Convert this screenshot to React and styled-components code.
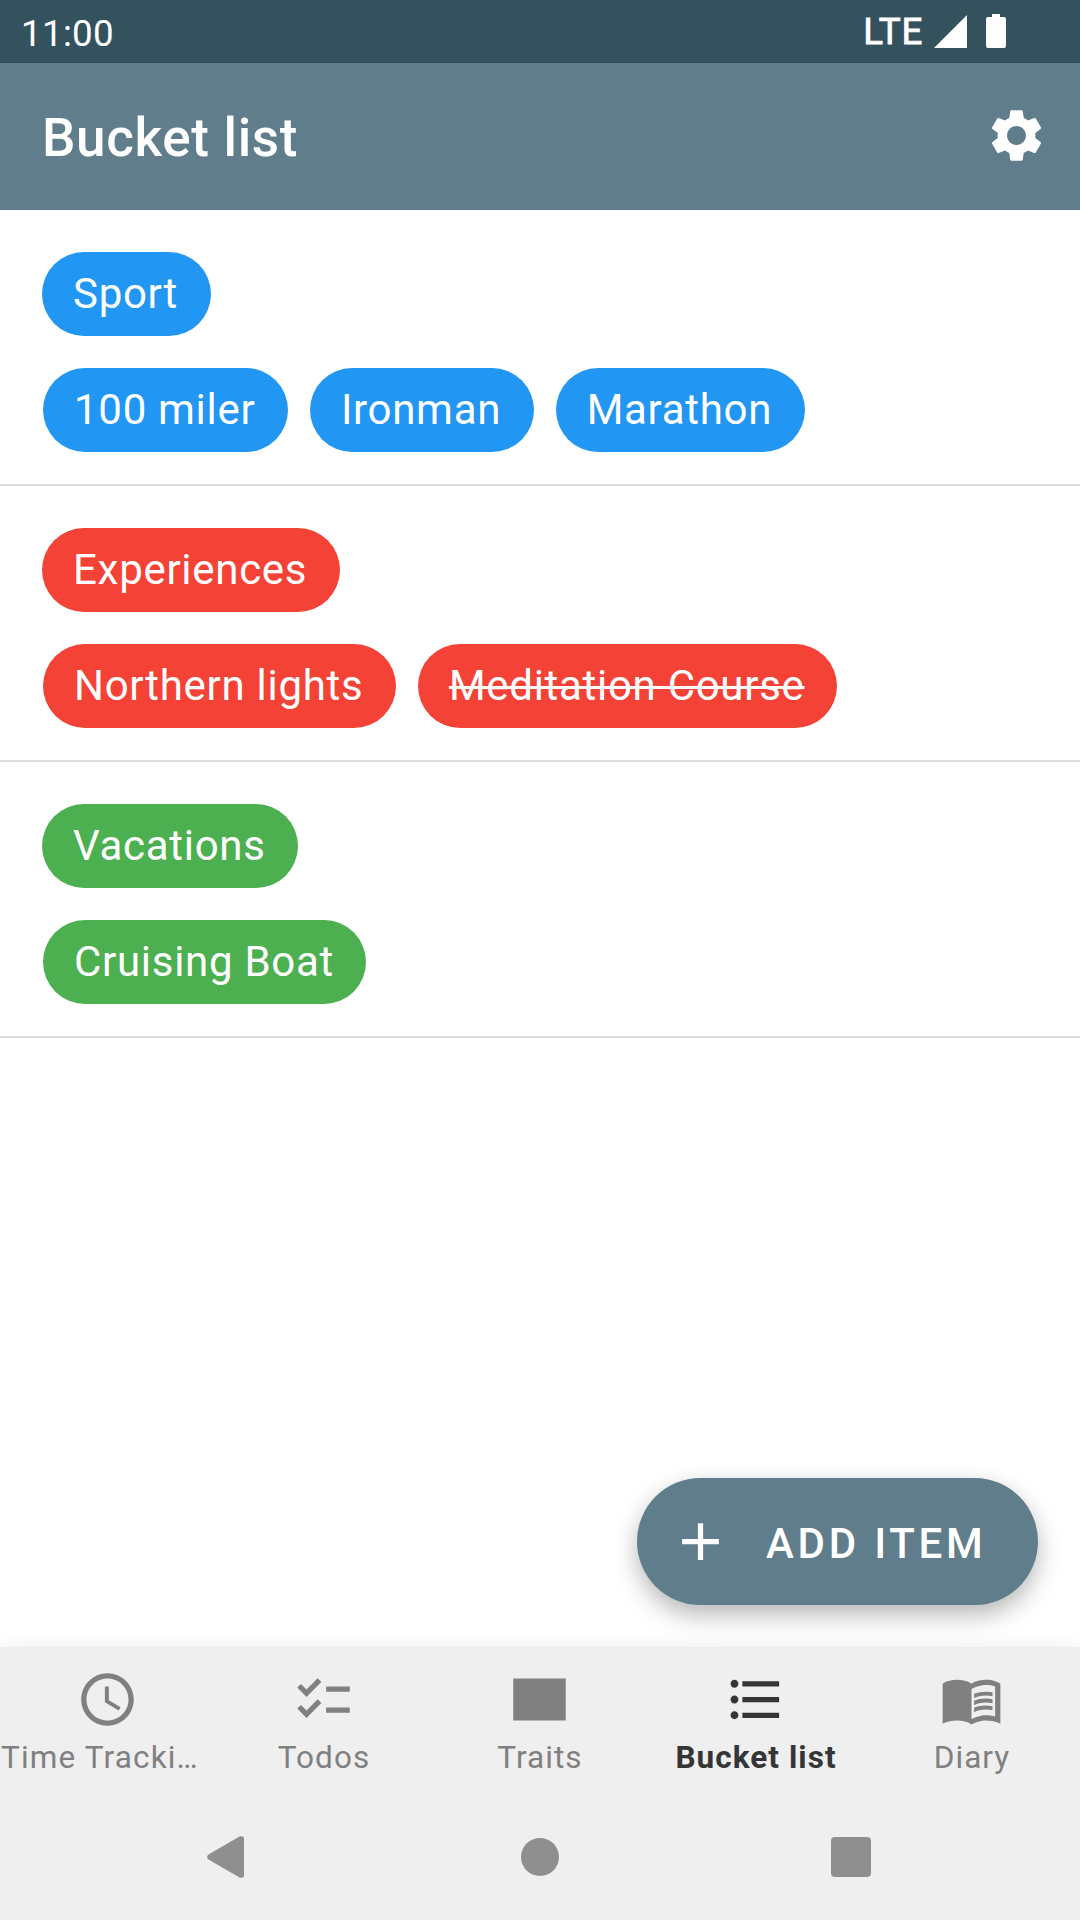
import styled, { createGlobalStyle, css } from "styled-components";
import {
  MdAdd,
  MdChecklist,
  MdFormatListBulleted,
  MdSchedule,
  MdSettings,
} from "react-icons/md";

const COLORS = {
  background: "#ffffff",
  primary: "#607d8b",
  primaryDark: "#34515e",
  blue: "#2196f3",
  red: "#f44336",
  green: "#4caf50",
  divider: "#dcdcdc",
  bar: "#efefef",
  inactive: "#808080",
  active: "#353535",
  systemButton: "#8f8f8f",
};

const groups = [
  {
    title: "Sport",
    color: COLORS.blue,
    items: [
      { label: "100 miler" },
      { label: "Ironman" },
      { label: "Marathon" },
    ],
  },
  {
    title: "Experiences",
    color: COLORS.red,
    items: [
      { label: "Northern lights" },
      { label: "Meditation Course", done: true },
    ],
  },
  {
    title: "Vacations",
    color: COLORS.green,
    items: [{ label: "Cruising Boat" }],
  },
];

const GlobalStyle = createGlobalStyle`
  *, *::before, *::after {
    box-sizing: border-box;
  }

  body {
    margin: 0;
    background-color: ${COLORS.background};
    font-family: Roboto, "Liberation Sans", sans-serif;
  }
`;

const Screen = styled.div`
  display: flex;
  flex-direction: column;
  width: 1080px;
  height: 1920px;
  overflow: hidden;
  background-color: ${COLORS.background};
`;

const StatusBar = styled.div`
  display: flex;
  align-items: center;
  justify-content: space-between;
  height: 63px;
  padding: 0 74px 0 21px;
  color: white;
  background-color: ${COLORS.primaryDark};
`;

const Clock = styled.span`
  padding-top: 3px;
  font-size: 36.75px;
  line-height: 43px;
  letter-spacing: 0.3px;
`;

const StatusIcons = styled.div`
  display: flex;
  align-items: center;
`;

const Network = styled.span`
  margin-right: 11px;
  font-size: 36.75px;
  line-height: 43px;
  letter-spacing: 0.7px;
  -webkit-text-stroke: 0.8px white;
`;

const SignalIcon = styled.svg`
  width: 33px;
  height: 33px;
  margin-right: 19px;
`;

const BatteryIcon = styled.svg`
  width: 20px;
  height: 34px;
  margin-bottom: 1px;
`;

const AppBar = styled.header`
  display: flex;
  align-items: center;
  justify-content: space-between;
  height: 147px;
  padding: 0 32px 0 42px;
  color: white;
  background-color: ${COLORS.primary};
`;

const Title = styled.h1`
  margin: 0;
  padding-top: 3px;
  font-size: 53px;
  font-weight: 500;
  line-height: 62px;
  letter-spacing: 0.65px;
`;

const SettingsIcon = styled(MdSettings)`
  width: 63px;
  height: 63px;
  margin-bottom: 3px;
`;

const Content = styled.main`
  flex: 1;
  display: flex;
  flex-direction: column;
`;

const Group = styled.section`
  display: flex;
  flex-direction: column;
  align-items: flex-start;
  gap: 32px;
  padding: 42px 42px 32px;
  border-bottom: 2px solid ${COLORS.divider};
`;

const ItemRow = styled.div`
  display: flex;
  gap: 22px;
  padding-left: 1px;
`;

const Chip = styled.div`
  height: 84px;
  padding: 0 32.5px 0 31px;
  border-radius: 42px;
  color: white;
  background-color: ${(p) => p.$color};
  font-size: 42px;
  line-height: 84px;
  letter-spacing: 0.71px;
  white-space: nowrap;
  text-decoration: ${(p) => (p.$done ? "line-through 2.5px" : "none")};
`;

const AddButton = styled.button`
  display: flex;
  align-items: center;
  align-self: flex-end;
  gap: 34px;
  width: 401px;
  height: 127px;
  margin: auto 42px 42px 0;
  padding: 0 0 0 32px;
  border: none;
  border-radius: 63.5px;
  color: white;
  background-color: ${COLORS.primary};
  box-shadow: 0 11px 24px rgba(0, 0, 0, 0.25), 0 2px 20px rgba(0, 0, 0, 0.04);
  font-family: inherit;
  font-size: 42px;
  font-weight: 500;
  line-height: 50px;
  letter-spacing: 3.75px;
  white-space: nowrap;
`;

const AddIcon = styled(MdAdd)`
  flex: none;
  width: 63px;
  height: 63px;
`;

const AddLabel = styled.span`
  padding-top: 5px;
`;

const BottomNav = styled.nav`
  display: grid;
  grid-template-columns: repeat(5, 1fr);
  height: 147px;
  background-color: ${COLORS.bar};
  box-shadow: 0 0 18px rgba(0, 0, 0, 0.08);
`;

const NavItem = styled.div`
  display: flex;
  flex-direction: column;
  align-items: center;
  min-width: 0;
  padding-top: 21px;
  color: ${(p) => (p.$active ? COLORS.active : COLORS.inactive)};

  svg {
    flex: none;
    width: 63px;
    height: 63px;
    margin-right: 1px;
  }
`;

const NavLabel = styled.span`
  width: 100%;
  margin-top: 8px;
  overflow: hidden;
  text-align: center;
  text-overflow: ellipsis;
  white-space: nowrap;
  font-size: 31.5px;
  font-weight: ${(p) => (p.$active ? 700 : 400)};
  line-height: 37px;
  letter-spacing: 1.05px;

  ${(p) =>
    p.$long &&
    css`
      padding: 0 8px 0 1px;
      text-align: left;
      letter-spacing: 1.15px;
    `}
`;

const SystemBar = styled.div`
  position: relative;
  display: flex;
  align-items: center;
  justify-content: space-between;
  height: 126px;
  padding: 0 209px 0 207px;
  background-color: ${COLORS.bar};
`;

const BackIcon = styled.svg`
  width: 37px;
  height: 42px;
`;

const HomeButton = styled.div`
  width: 38px;
  height: 38px;
  margin-left: 5px;
  border-radius: 50%;
  background-color: ${COLORS.systemButton};
`;

const RecentsButton = styled.div`
  width: 40px;
  height: 40px;
  border-radius: 4px;
  background-color: ${COLORS.systemButton};
`;

function TraitsIcon() {
  return (
    <svg viewBox="0 0 24 24" fill="currentColor">
      <rect x="2" y="4" width="20" height="16" />
    </svg>
  );
}

function DiaryIcon() {
  return (
    <svg viewBox="0 0 24 24" fill="currentColor">
      <path
        fillRule="evenodd"
        d="M12 6c-1.45-1.1-3.55-1.5-5.5-1.5S2.45 4.9 1 6v15.2c1.6-.8 3.7-1.2 5.5-1.2 1.95 0 4.05.4 5.5 1.5 1.35-.85 3.8-1.5 5.5-1.5 1.8 0 3.9.4 5.5 1.2V6c-.6-.45-1.25-.75-2-1-1.11-.35-2.33-.5-3.5-.5-1.95 0-4.05.4-5.5 1.5zM21 18.5c-1.1-.35-2.3-.5-3.5-.5-1.7 0-4.15.65-5.5 1.5V8c1.35-.85 3.8-1.5 5.5-1.5 1.2 0 2.4.15 3.5.5z"
      />
      <path d="M17.5 10.5c.88 0 1.73.09 2.5.26V9.24c-.79-.15-1.64-.24-2.5-.24-1.7 0-3.24.29-4.5.83v1.66c1.13-.64 2.7-.99 4.5-.99z" />
      <path d="M13 12.49v1.66c1.13-.64 2.7-.99 4.5-.99.88 0 1.73.09 2.5.26V11.9c-.79-.15-1.64-.24-2.5-.24-1.7 0-3.24.3-4.5.83z" />
      <path d="M17.5 14.33c-1.7 0-3.24.29-4.5.83v1.66c1.13-.64 2.7-.99 4.5-.99.88 0 1.73.09 2.5.26v-1.52c-.79-.16-1.64-.24-2.5-.24z" />
    </svg>
  );
}

const tabs = [
  { label: "Time Tracking", icon: MdSchedule, long: true },
  { label: "Todos", icon: MdChecklist },
  { label: "Traits", icon: TraitsIcon },
  { label: "Bucket list", icon: MdFormatListBulleted, active: true },
  { label: "Diary", icon: DiaryIcon },
];

function App() {
  return (
    <>
      <GlobalStyle />
      <Screen>
        <StatusBar>
          <Clock>11:00</Clock>
          <StatusIcons>
            <Network>LTE</Network>
            <SignalIcon viewBox="0 0 33 33" fill="white">
              <path d="M33 0v33H0z" />
            </SignalIcon>
            <BatteryIcon viewBox="0 0 20 34" fill="white">
              <path d="M6 0h8v3h4q2 0 2 2v27q0 2-2 2H2q-2 0-2-2V5q0-2 2-2h4z" />
            </BatteryIcon>
          </StatusIcons>
        </StatusBar>

        <AppBar>
          <Title>Bucket list</Title>
          <SettingsIcon />
        </AppBar>

        <Content>
          {groups.map((group) => (
            <Group key={group.title}>
              <Chip $color={group.color}>{group.title}</Chip>
              <ItemRow>
                {group.items.map((item) => (
                  <Chip
                    key={item.label}
                    $color={group.color}
                    $done={item.done}
                  >
                    {item.label}
                  </Chip>
                ))}
              </ItemRow>
            </Group>
          ))}

          <AddButton>
            <AddIcon />
            <AddLabel>ADD ITEM</AddLabel>
          </AddButton>
        </Content>

        <BottomNav>
          {tabs.map(({ label, icon: Icon, active, long }) => (
            <NavItem key={label} $active={active}>
              <Icon />
              <NavLabel $active={active} $long={long}>
                {label}
              </NavLabel>
            </NavItem>
          ))}
        </BottomNav>

        <SystemBar>
          <BackIcon viewBox="0 0 37 42" fill={COLORS.systemButton}>
            <path d="M1.5 18.5 32.5.6Q37-1 37 3v36q0 4-4.5 2.4L1.5 23.5Q-1.5 21 1.5 18.5z" />
          </BackIcon>
          <HomeButton />
          <RecentsButton />
        </SystemBar>
      </Screen>
    </>
  );
}

export default App;
